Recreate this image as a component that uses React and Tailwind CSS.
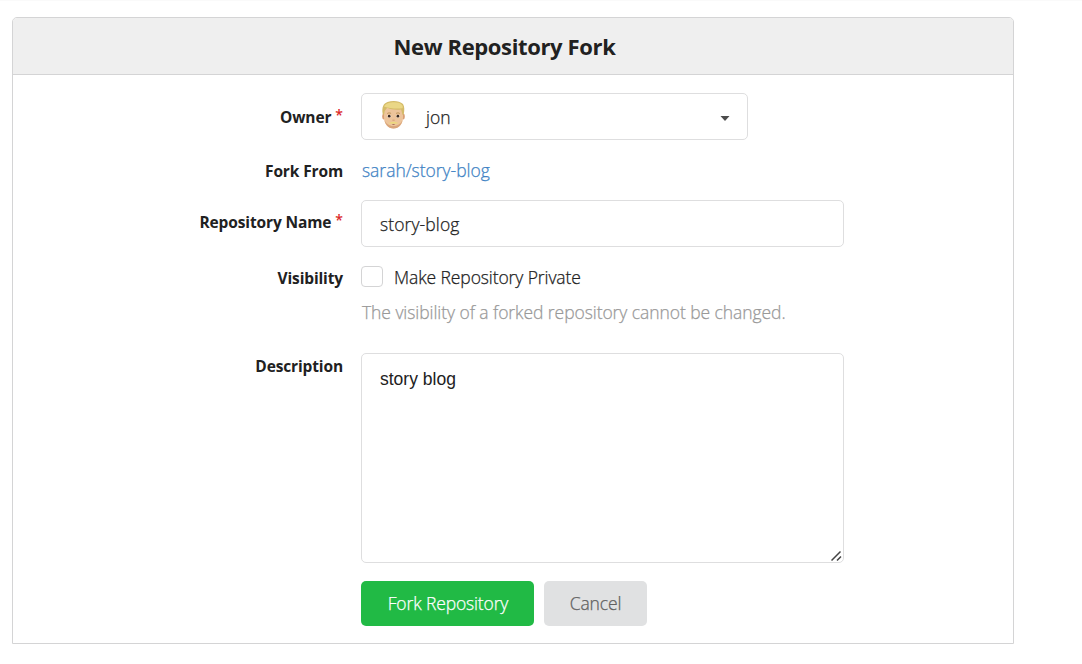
function Row({ label, required, className = '', labelClass = '', children }) {
  return (
    <div className={`flex items-start ${className}`}>
      <div className={`mr-[18px] w-[330px] shrink-0 text-right text-[15.5px] leading-5 font-bold tracking-[-0.13px] whitespace-nowrap [-webkit-text-stroke:0px] ${labelClass}`}>
        {label}
        {required && <span className="ml-1 inline-block -translate-y-[3px] text-[14px] font-semibold tracking-normal text-[#db2828]">*</span>}
      </div>
      {children}
    </div>
  );
}

function Avatar() {
  return (
    <svg width="26" height="30" viewBox="0 0 26 30" aria-hidden="true">
      <ellipse cx="2.800" cy="16.500" rx="1.600" ry="3" fill="#d99f75" />
      <ellipse cx="22.200" cy="16.500" rx="1.600" ry="3" fill="#d99f75" />
      <path d="M3 9c0-5 4-7 9.500-7S22 4 22 9v8.500c0 6.500-4.200 11-9.500 11S3 24 3 17.500z" fill="#edc49b" />
      <path d="M3.500 20c1 5.500 4.500 8.500 9 8.500s8-3 9-8.500c-1.500 3.500-4.500 6-9 6s-7.500-2.500-9-6z" fill="#d9a57a" />
      <path d="M1.700 14C.5 7 2.500 3.500 6.500 2c5-1.700 12-1.300 15.500 2 1.700 2.500 1.500 6.500.8 10l-1.300 1-1.300-5.500c-5 .6-10 .2-14-1.700L3.700 11 3 15z" fill="#d4bb68" />
      <path d="M3 6.500c1.500-3 5.500-4.200 10.500-4.200 3.500 0 6 .7 7.500 2.700.8 1.200 1 2 .5 3.200C15.500 9 9 8.500 3 6.500z" fill="#ead786" />
      <path d="M6.200 13.500c1.200-.8 2.700-.8 3.900 0M15 13.500c1.200-.8 2.700-.8 3.900 0" stroke="#b98f50" fill="none" strokeWidth=".9" />
      <ellipse cx="8.200" cy="16.200" rx="1.900" ry="1.200" fill="#fff5e8" />
      <ellipse cx="16.900" cy="16.200" rx="1.900" ry="1.200" fill="#fff5e8" />
      <circle cx="8.200" cy="16.200" r="1.350" fill="#38271f" />
      <circle cx="16.900" cy="16.200" r="1.350" fill="#38271f" />
      <path d="M11.400 20.200h2.300" stroke="#cf946a" strokeWidth=".8" />
      <path d="M7.300 23.100c1.700-.3 3.500-1.700 5.200-1.300 1.700-.4 3.500 1 5.200 1.300-1.700.8-3.500.8-5.200.4-1.700.4-3.500.4-5.200-.4z" fill="#ecd97e" />
      <path d="M10.700 24.100c1.200.8 2.400.8 3.600 0z" fill="#915344" />
    </svg>
  );
}

export default function App() {
  return (
    <div className="h-[664px] w-[1082px] overflow-hidden border-t border-[#fafafa] bg-white font-['Open_Sans','Noto_Sans',sans-serif] text-[17.5px] font-light text-[#212121] [-webkit-text-stroke:0.25px]">
      <form className="mt-4 ml-3 flex h-[627px] w-[1002px] flex-col rounded-t-[5px] border border-[#d4d4d5]">
        <h1 className="flex h-[57px] shrink-0 items-center justify-center rounded-t-[4px] border-b border-[#d4d4d5] bg-[#efefef] pt-px pr-[17px] text-[22px] font-bold tracking-[-0.36px] [-webkit-text-stroke:0px]">
          New Repository Fork
        </h1>

        <Row label="Owner" required className="mt-[18px]" labelClass="pt-[14px]">
          <div className="flex h-[47px] w-[387px] items-center rounded-[5px] border border-[#dededf] pr-[17px] pl-[19px] text-[#212121]">
            <span className="-mt-1"><Avatar /></span>
            <span className="ml-[19px] leading-6">jon</span>
            <svg className="mt-[3px] ml-auto" width="10" height="5" viewBox="0 0 10 5"><path d="M.500 0h9L5 5z" fill="#4c4c4c" /></svg>
          </div>
        </Row>

        <Row label="Fork From" className="mt-[18px]" labelClass="pt-[3px]">
          <a className="ml-px h-6 leading-6 tracking-[-0.03px] text-[#4183c4]">sarah/story-blog</a>
        </Row>

        <Row label="Repository Name" required className="mt-[18px]" labelClass="pt-[12px]">
          <div className="flex h-[47px] w-[483px] items-center rounded-[5px] border border-[#dededf] px-[18px] pt-0.5 tracking-[0.1px]">story-blog</div>
        </Row>

        <Row label="Visibility" className="mt-[18px]" labelClass="pt-[3px]">
          <div>
            <div className="flex h-6 items-center">
              <span className="-mt-0.5 mr-[11px] h-[21px] w-[22px] rounded-[4px] border border-[#d4d4d5]" />
              <span className="leading-6 tracking-[-0.1px]">Make Repository Private</span>
            </div>
            <p className="mt-[11px] mb-px ml-px h-6 leading-6 tracking-[-0.07px] text-[#999999]">The visibility of a forked repository cannot be changed.</p>
          </div>
        </Row>

        <Row label="Description" className="mt-7" labelClass="pt-[3px]">
          <div className="relative h-[210px] w-[483px] rounded-[5px] border border-[#dededf] px-[18px] pt-[14px] font-['Liberation_Sans',Arial,sans-serif] leading-[22px] font-normal [-webkit-text-stroke:0px]">
            story blog
            <svg className="absolute right-[1px] bottom-px" width="11" height="11" viewBox="0 0 11 11"><path d="M.500 10.500l9-9M6 10.500l4-4" stroke="#444" strokeWidth="1.500" /></svg>
          </div>
        </Row>

        <div className="mt-[18px] ml-[348px] flex gap-[10px] tracking-[-0.14px]">
          <button type="button" className="h-[45px] w-[173px] rounded-[5px] bg-[#21ba45] pl-px text-white">Fork Repository</button>
          <button type="button" className="h-[45px] w-[103px] rounded-[5px] bg-[#e0e1e2] text-[#606060]">Cancel</button>
        </div>
      </form>
    </div>
  );
}
